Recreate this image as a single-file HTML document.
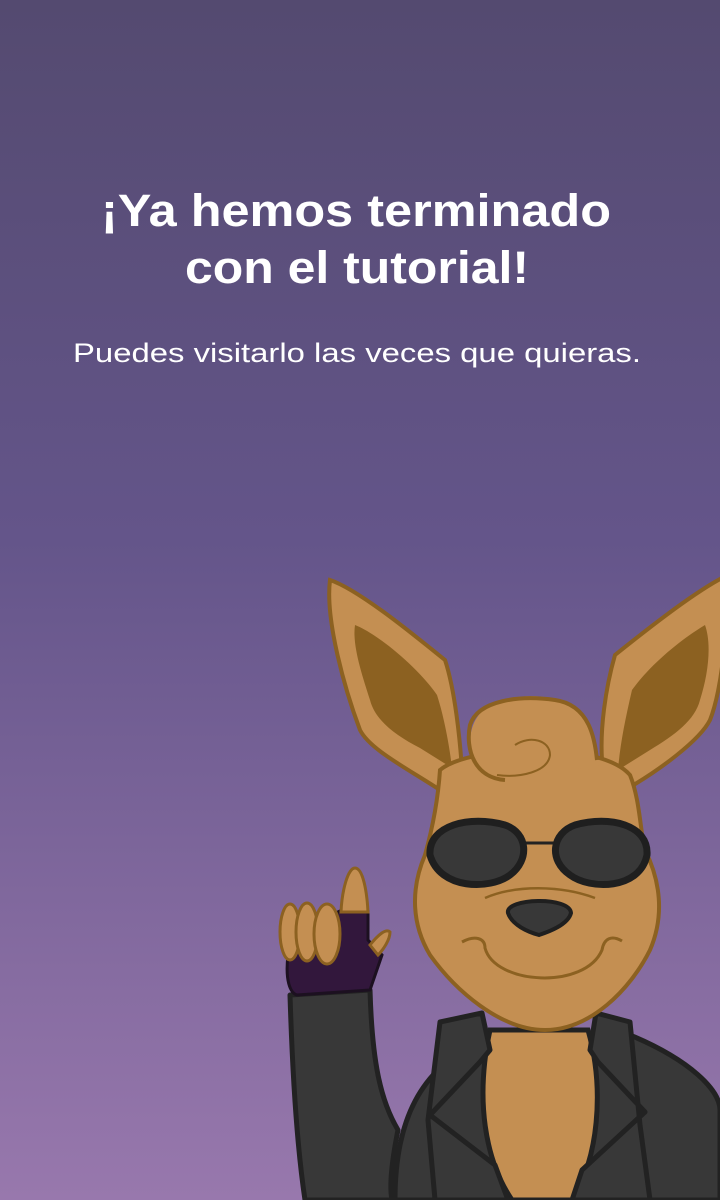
<!DOCTYPE html>
<html><head><meta charset="utf-8"><style>
html,body{margin:0;padding:0}
body{width:720px;height:1200px;overflow:hidden;background:linear-gradient(#544a70 0%,#64558a 45%,#9878ad 100%);font-family:"Liberation Sans",sans-serif}
svg{position:absolute;left:0;top:0}
</style></head><body>
<svg width="720" height="1200" viewBox="0 0 720 1200">
<g fill="#fff" font-family="Liberation Sans, sans-serif" text-anchor="middle">
<text x="356" y="226" font-size="45" font-weight="bold" textLength="510" lengthAdjust="spacingAndGlyphs">¡Ya hemos terminado</text>
<text x="357" y="283" font-size="45" font-weight="bold" textLength="344" lengthAdjust="spacingAndGlyphs">con el tutorial!</text>
<text x="357" y="362" font-size="27" textLength="568" lengthAdjust="spacingAndGlyphs">Puedes visitarlo las veces que quieras.</text>
</g>
<!-- body / jacket -->
<path d="M395,1200 C395,1120 420,1070 480,1040 L630,1035 C690,1060 720,1090 720,1110 L720,1200 Z" fill="#383838" stroke="#222" stroke-width="5"/>
<!-- chest -->
<path d="M490,1030 C475,1100 485,1160 512,1200 L572,1200 C598,1160 605,1090 588,1030 Z" fill="#c48f52" stroke="#222" stroke-width="5"/>
<!-- lapels -->
<path d="M440,1022 L482,1013 L490,1050 L480,1062 L430,1115 L495,1165 L508,1200 L435,1200 L428,1120 Z" fill="#383838" stroke="#222" stroke-width="5" stroke-linejoin="round"/>
<path d="M630,1022 L596,1013 L590,1050 L598,1062 L645,1112 L582,1170 L572,1200 L650,1200 L640,1125 Z" fill="#383838" stroke="#222" stroke-width="5" stroke-linejoin="round"/>
<!-- arm -->
<path d="M290,995 L370,990 C372,1060 380,1100 398,1130 C390,1170 390,1190 392,1200 L305,1200 C296,1140 292,1060 290,995 Z" fill="#383838" stroke="#222" stroke-width="5" stroke-linejoin="round"/>
<!-- glove -->
<path d="M288,955 C285,980 290,993 297,995 L370,990 L382,955 L368,940 L368,912 L342,910 L300,930 Z" fill="#32173c" stroke="#1c1020" stroke-width="3"/>
<path d="M370,945 C378,935 386,928 390,932 C390,940 383,950 378,955 Z" fill="#c48f52" stroke="#8c6121" stroke-width="3"/>
<path d="M341,912 C342,890 348,868 355,868 C363,868 367,892 368,912 Z" fill="#c48f52" stroke="#8c6121" stroke-width="3"/>
<ellipse cx="290" cy="932" rx="10" ry="28" fill="#c48f52" stroke="#8c6121" stroke-width="3"/>
<ellipse cx="307" cy="932" rx="11" ry="29" fill="#c48f52" stroke="#8c6121" stroke-width="3"/>
<ellipse cx="327" cy="934" rx="13" ry="30" fill="#c48f52" stroke="#8c6121" stroke-width="3"/>
<!-- ears -->
<path d="M330,580 C360,590 420,640 445,660 C455,690 460,740 462,770 L440,790 C410,770 370,750 360,730 C345,690 325,620 330,580 Z" fill="#c48f52" stroke="#8c6121" stroke-width="4"/>
<path d="M355,625 C380,635 420,670 437,695 C445,720 450,750 452,768 L420,748 C395,735 375,720 370,700 C362,675 352,645 355,625 Z" fill="#8c6121"/>
<path d="M722,578 C690,595 640,635 615,655 C605,690 600,730 602,760 L625,790 C660,770 700,740 710,720 C722,690 730,620 722,578 Z" fill="#c48f52" stroke="#8c6121" stroke-width="4"/>
<path d="M705,625 C680,640 650,665 632,690 C625,720 620,745 618,770 L650,750 C675,735 695,720 700,700 C708,675 712,645 705,625 Z" fill="#8c6121"/>
<!-- head -->
<path d="M440,770 C470,745 600,740 630,775 C640,800 640,830 645,850 C660,880 665,915 650,950 C630,990 590,1030 545,1030 C500,1030 455,990 430,955 C412,925 410,890 425,855 C432,830 438,800 440,770 Z" fill="#c48f52" stroke="#8c6121" stroke-width="4"/>
<!-- tuft -->
<path d="M478,770 C462,740 470,705 510,698 C550,692 590,700 597,752 L600,775 C580,760 540,776 505,780 Z" fill="#c48f52"/>
<path d="M505,780 C475,778 465,750 470,725 C478,700 520,695 555,700 C590,705 595,740 597,760" fill="none" stroke="#8c6121" stroke-width="4"/>
<path d="M515,745 C530,735 550,740 550,755 C548,772 520,778 497,775" fill="none" stroke="#8c6121" stroke-width="2"/>
<!-- glasses -->
<line x1="520" y1="843" x2="555" y2="843" stroke="#222" stroke-width="3"/>
<path d="M430,855 C428,825 470,815 505,825 C528,833 530,860 510,875 C490,890 440,890 430,855 Z" fill="#383838" stroke="#1f1f1f" stroke-width="7"/>
<path d="M647,855 C649,825 610,815 575,825 C552,833 548,860 570,875 C590,890 640,890 647,855 Z" fill="#383838" stroke="#1f1f1f" stroke-width="7"/>
<!-- nose & mouth -->
<path d="M485,898 C515,885 560,885 595,898" fill="none" stroke="#8c6121" stroke-width="2.5"/>
<path d="M508,913 C505,898 570,896 571,913 C568,925 548,932 539,935 C528,932 512,925 508,913 Z" fill="#383838" stroke="#1f1f1f" stroke-width="4"/>
<path d="M462,942 C475,935 485,938 485,948 C495,985 585,990 602,950 C604,938 612,935 622,941" fill="none" stroke="#8c6121" stroke-width="3"/>
</svg>
</body></html>
